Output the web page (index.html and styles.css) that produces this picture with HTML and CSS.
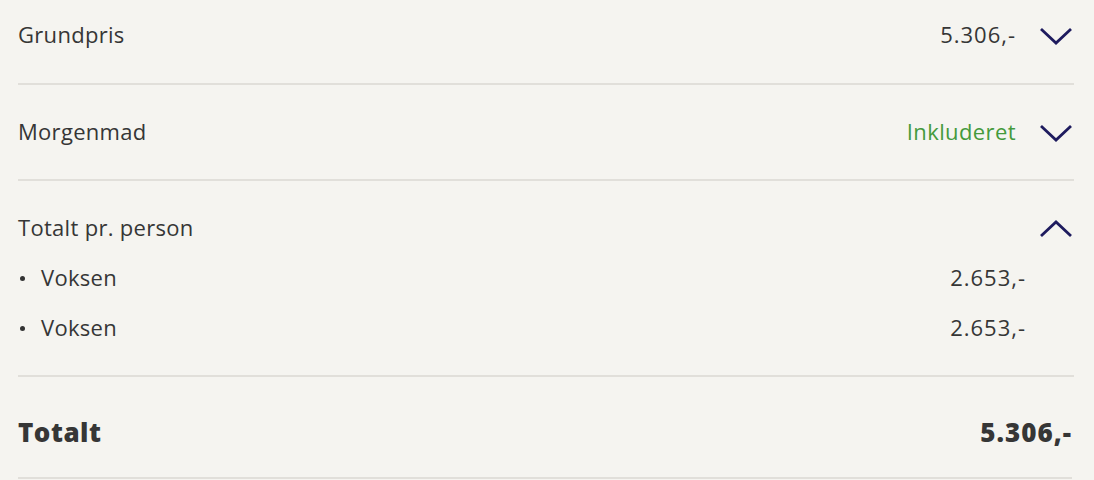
FILE: index.html
```html
<!DOCTYPE html>
<html lang="da">
<head>
<meta charset="utf-8">
<link rel="stylesheet" href="styles.css">
</head>
<body>
<div class="summary">
  <div class="row row-first">
    <span class="label">Grundpris</span>
    <div class="right">
      <span class="value num">5.306,-</span>
      <svg class="chev" width="34" height="20" viewBox="0 0 34 20"><path d="M2 3 L17 17 L32 3" fill="none" stroke="#1e1b5e" stroke-width="2.8"/></svg>
    </div>
  </div>
  <div class="row">
    <span class="label">Morgenmad</span>
    <div class="right">
      <span class="value green">Inkluderet</span>
      <svg class="chev" width="34" height="20" viewBox="0 0 34 20"><path d="M2 3 L17 17 L32 3" fill="none" stroke="#1e1b5e" stroke-width="2.8"/></svg>
    </div>
  </div>
  <div class="group">
    <div class="group-head">
      <span class="label">Totalt pr. person</span>
      <svg class="chev" width="34" height="20" viewBox="0 0 34 20"><path d="M2 17 L17 3 L32 17" fill="none" stroke="#1e1b5e" stroke-width="2.8"/></svg>
    </div>
    <ul class="items">
      <li class="item"><span class="item-label"><span class="dot"></span>Voksen</span><span class="value num">2.653,-</span></li>
      <li class="item"><span class="item-label"><span class="dot"></span>Voksen</span><span class="value num">2.653,-</span></li>
    </ul>
  </div>
  <div class="row total">
    <span class="label">Totalt</span>
    <span class="value num">5.306,-</span>
  </div>
</div>
</body>
</html>
```
FILE: styles.css
```css
html, body {
  margin: 0;
  padding: 0;
  background: #f5f4f0;
}
body {
  font-family: "Open Sans", "Noto Sans", sans-serif;
  color: #363636;
  font-size: 22px;
}
.summary {
  margin: 0 20px 0 18px;
}
.row {
  display: flex;
  justify-content: space-between;
  align-items: center;
  height: 24px;
  padding: 36px 0 34px;
  border-bottom: 2px solid #e1dfda;
}
.row-first {
  padding-top: 24px;
  padding-bottom: 35px;
}
.label,
.value,
.item-label {
  line-height: 20px;
  padding-bottom: 4px;
}
.label {
  letter-spacing: 0.3px;
}
.num {
  letter-spacing: 1px;
}
.right {
  display: flex;
  align-items: center;
  gap: 23px;
}
.chev {
  display: block;
  margin-right: 1px;
}
.green {
  color: #449a3c;
  letter-spacing: 0.4px;
}
.group {
  padding: 36px 0 34px;
  border-bottom: 2px solid #e1dfda;
}
.group-head {
  display: flex;
  justify-content: space-between;
  align-items: center;
  height: 24px;
}
.items {
  list-style: none;
  margin: 26px 0 0;
  padding: 0 48px 0 0;
  display: flex;
  flex-direction: column;
  gap: 26px;
}
.item {
  display: flex;
  justify-content: space-between;
  align-items: center;
  height: 24px;
}
.item-label {
  display: flex;
  align-items: center;
  letter-spacing: 0.3px;
}
.dot {
  width: 5px;
  height: 5px;
  border-radius: 50%;
  background: #333;
  margin: 2px 16px 0 2px;
}
.total {
  padding: 41px 0 31px;
  height: 28px;
  font-weight: 800;
  font-size: 26px;
  margin-right: 2px;
}
.total .label,
.total .value {
  line-height: 28px;
  padding-bottom: 0;
}
.total .label {
  letter-spacing: 0.5px;
}
```
